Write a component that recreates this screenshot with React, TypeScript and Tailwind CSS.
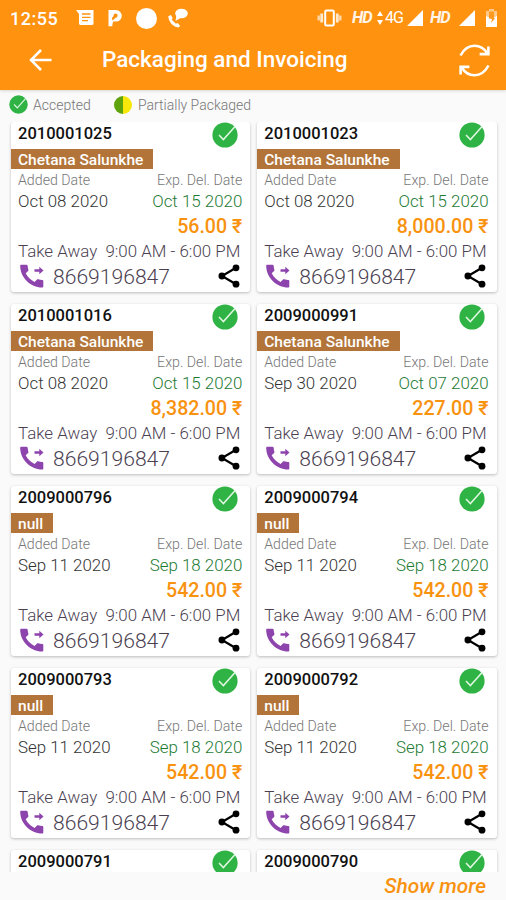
type Order = {
  id: string;
  customer: string;
  added: string;
  due: string;
  amount: string;
};

const PHONE = "8669196847";

const orders: Order[] = [
  { id: "2010001025", customer: "Chetana Salunkhe", added: "Oct 08 2020", due: "Oct 15 2020", amount: "56.00" },
  { id: "2010001023", customer: "Chetana Salunkhe", added: "Oct 08 2020", due: "Oct 15 2020", amount: "8,000.00" },
  { id: "2010001016", customer: "Chetana Salunkhe", added: "Oct 08 2020", due: "Oct 15 2020", amount: "8,382.00" },
  { id: "2009000991", customer: "Chetana Salunkhe", added: "Sep 30 2020", due: "Oct 07 2020", amount: "227.00" },
  { id: "2009000796", customer: "null", added: "Sep 11 2020", due: "Sep 18 2020", amount: "542.00" },
  { id: "2009000794", customer: "null", added: "Sep 11 2020", due: "Sep 18 2020", amount: "542.00" },
  { id: "2009000793", customer: "null", added: "Sep 11 2020", due: "Sep 18 2020", amount: "542.00" },
  { id: "2009000792", customer: "null", added: "Sep 11 2020", due: "Sep 18 2020", amount: "542.00" },
];

const nextOrderIds = ["2009000791", "2009000790"];

function CheckBadge({ className }: { className: string }) {
  return (
    <svg viewBox="0 0 26 26" className={className}>
      <circle cx="13" cy="13" r="12.6" fill="#2fb344" />
      <path d="M7 13l4.4 4.6L23.5 4" fill="none" stroke="#e0f7e2" strokeWidth="1.5" />
    </svg>
  );
}

function PhoneForwardIcon() {
  return (
    <svg viewBox="0 0 24 24" className="h-6 w-6" fill="#8e44ad">
      <path d="M1.2.8h5.300c.7 0 1.100.4 1.200 1.100.1 1.400.3 2.600.7 3.800.1.500 0 .9-.3 1.200L5.700 9.300c1.900 3.900 4.900 6.700 8.900 8.600l2.400-2.400c.3-.3.800-.4 1.200-.3 1.400.5 2.500.7 4 .7.7 0 1.100.4 1.100 1.100v5.400c0 .7-.4 1.100-1.100 1.100C10.400 23.500.3 13.400.2 2c0-.7.3-1.200 1-1.200z" />
      <path d="M14.500 5.200h4.800V2.800l4.200 3.700-4.200 3.700V7.800h-4.800z" />
    </svg>
  );
}

function ShareIcon() {
  return (
    <svg viewBox="0 0 22 24" className="h-6 w-[22px]">
      <path d="M18 3.800L4 12l14 8.200" fill="none" stroke="#000" strokeWidth="2.200" />
      <circle cx="18" cy="3.800" r="3.400" />
      <circle cx="3.900" cy="12" r="3.400" />
      <circle cx="18" cy="20.200" r="3.400" />
    </svg>
  );
}

function SignalIcon() {
  return (
    <svg viewBox="0 0 16 16" className="h-4 w-4" fill="#fff">
      <path d="M16 0v16H0z" />
    </svg>
  );
}

function StatusBar() {
  return (
    <div className="flex h-9 items-center pr-2 pl-[10px] text-white">
      <span className="w-[66px] text-[18px] font-medium tracking-[0.5px]">12:55</span>
      <svg viewBox="0 0 18 16" className="h-4 w-[18px]">
        <path d="M0 0h17.500v13.500q0 1.500-1.500 1.500H4.500Q3 15 3 13.500V4z" fill="#fff" />
        <path d="M6 4h8.500M6 7.300h8.500M6 10.600h6" stroke="#ff920f" strokeWidth="1.300" />
      </svg>
      <svg viewBox="0 0 14 18" className="ml-[14px] h-[18px] w-[14px]" fill="#fff">
        <path d="M.5 1H8a5.800 5.800 0 0 1 0 11.600H5L4.200 17.300H.5z" />
        <ellipse cx="7.600" cy="6.600" rx="2" ry="2.200" fill="#ff920f" />
        <path d="M3.800 9l2.600-2.800 1.200 2.600-3 2.700z" fill="#ff920f" />
      </svg>
      <span className="ml-[14px] h-[21px] w-[21px] rounded-full bg-white" />
      <svg viewBox="0 0 20 20" className="ml-[11px] h-5 w-5" fill="#fff">
        <ellipse cx="13.500" cy="5.500" rx="6.300" ry="4.800" />
        <path d="M8.500 7l-1 6 5-3z" />
        <path d="M.3 8.200l2.700-1.200 1.700 3.200-1.100 1.300 4.300 4.200 1.800-.7 2.600 3-2 1.500C4.800 18.500.6 14 .3 8.200z" />
      </svg>
      <svg viewBox="0 0 25 18" className="ml-auto h-[18px] w-[25px]" fill="none" stroke="#fff">
        <rect x="8.200" y="1.500" width="8.600" height="15" rx="1.200" strokeWidth="2" />
        <path d="M4.700 4.500v9M20.300 4.500v9" strokeWidth="2.800" opacity=".8" />
        <path d="M1.700 6.500v5M23.300 6.500v5" strokeWidth="2.400" opacity=".65" />
      </svg>
      <span className="ml-[10px] w-[22px] text-[16.500px] leading-5 font-bold tracking-[-1px] italic opacity-90">HD</span>
      <svg viewBox="0 0 6 14" className="ml-[3px] h-[14px] w-[6px]" fill="#fff">
        <path d="M3 0l3 5H0zM3 14L0 9h6z" />
      </svg>
      <span className="ml-[2px] w-[19px] text-[16px] leading-5 tracking-[-1px]">4G</span>
      <span className="ml-[3px]">
        <SignalIcon />
      </span>
      <span className="ml-[7px] w-[22px] text-[16.500px] leading-5 font-bold tracking-[-1px] italic opacity-90">HD</span>
      <span className="ml-[7px]">
        <SignalIcon />
      </span>
      <svg viewBox="0 0 11 18" className="mr-px ml-[11px] h-[18px] w-[11px]">
        <path d="M3 2V0h5v2h3v7H0V2z" fill="#ffc98b" />
        <path d="M0 7l4 2V7h3v2l4-2v11H0z" fill="#fff" />
        <path d="M3 2.500h5v6.500l1 .5L5 14l1-4-3-.5z" fill="#ff9a20" />
      </svg>
    </div>
  );
}

function Header() {
  return (
    <header className="z-10 h-[90px] shrink-0 bg-[#ff920f] shadow-[0_1px_3px_rgba(0,0,0,0.15)]">
      <StatusBar />
      <div className="flex h-12 items-center pr-4 pl-[29px]">
        <svg viewBox="0 0 23 22" className="h-[22px] w-[23px]" fill="none" stroke="#fff" strokeWidth="2.500">
          <path d="M22.500 11H2M12 1L2 11l10 10" />
        </svg>
        <h1 className="ml-[50px] text-[22.500px] font-medium text-white">Packaging and Invoicing</h1>
        <svg viewBox="0 0 31 33" className="ml-auto h-[33px] w-[31px]" fill="none" stroke="#fff" strokeWidth="2.600">
          <path d="M1.500 11.500C5 5 10 1.800 15.500 1.800c5.500 0 9.700 2.700 12.500 7.200" />
          <path d="M29.400 2.500v7.600h-8.800" />
          <path d="M29.500 21.500c-3.500 6.500-8.500 9.700-14 9.700-5.500 0-9.700-2.700-12.500-7.200" />
          <path d="M1.600 30.500v-7.600h8.800" />
        </svg>
      </div>
    </header>
  );
}

function Legend() {
  return (
    <div className="flex h-8 shrink-0 items-center pb-[3px] pl-[9px] text-[14px] font-light text-[#777]">
      <CheckBadge className="h-[19px] w-[19px]" />
      <span className="ml-[5px] w-[81px] pt-0.5">Accepted</span>
      <svg viewBox="0 0 18 18" className="h-[18px] w-[18px]">
        <path d="M9 0a9 9 0 0 0 0 18z" fill="#5fa30c" />
        <path d="M9 0a9 9 0 0 1 0 18z" fill="#f7e80a" />
      </svg>
      <span className="ml-[6px] pt-0.5">Partially Packaged</span>
    </div>
  );
}

function CardTop({ id }: { id: string }) {
  return (
    <div className="flex h-[27px] items-start justify-between pr-3 pl-[7px]">
      <span className="text-[16.500px] leading-[24px] font-medium text-[#111]">{id}</span>
      <CheckBadge className="h-[26px] w-[26px]" />
    </div>
  );
}

function OrderCard({ order }: { order: Order }) {
  return (
    <article className="h-[170px] rounded-[3px] bg-white whitespace-nowrap shadow-[0_1px_3px_rgba(0,0,0,0.25)]">
      <CardTop id={order.id} />
      <div className="flex h-5">
        <span className="bg-[#b27438] pr-[10px] pl-[7px] text-[15.500px] leading-[22px] font-medium text-white">
          {order.customer}
        </span>
      </div>
      <div className="flex h-[22px] items-center justify-between pt-0.5 pr-2 pl-[7px] text-[14.200px] font-light text-[#777]">
        <span>Added Date</span>
        <span>Exp. Del. Date</span>
      </div>
      <div className="flex h-[22px] items-center justify-between pr-2 pl-[7px] text-[16.900px] font-light">
        <span className="text-[#333]">{order.added}</span>
        <span className="text-[#1d7a33]">{order.due}</span>
      </div>
      <div className="flex h-[26px] items-center justify-end pt-px pr-2 text-[19.600px] font-medium text-[#f8920f]">
        {order.amount} ₹
      </div>
      <div className="flex h-6 items-center justify-between pt-0.5 pr-[10px] pl-[7px] text-[16.900px] font-light text-[#4b3f52]">
        <span>Take Away</span>
        <span>9:00 AM - 6:00 PM</span>
      </div>
      <div className="flex h-[26px] items-center pr-[10.5px] pl-[9px]">
        <PhoneForwardIcon />
        <span className="ml-[9px] pt-px text-[21.100px] font-light text-[#4b3f52]">{PHONE}</span>
        <span className="ml-auto">
          <ShareIcon />
        </span>
      </div>
    </article>
  );
}

export default function App() {
  return (
    <div className="flex h-[900px] w-[506px] flex-col overflow-hidden bg-[#fafafa] font-[Roboto,'Noto_Sans',sans-serif]">
      <Header />
      <Legend />
      <main className="grid h-[750px] shrink-0 grid-cols-2 content-start gap-x-[7px] gap-y-3 overflow-hidden pr-[9.5px] pl-[11px]">
        {orders.map((order) => (
          <OrderCard key={order.id} order={order} />
        ))}
        {nextOrderIds.map((id) => (
          <article key={id} className="h-[27px] rounded-t-[3px] bg-white shadow-[0_1px_3px_rgba(0,0,0,0.25)]">
            <CardTop id={id} />
          </article>
        ))}
      </main>
      <footer className="flex h-7 items-center justify-end pt-0.5 pr-5">
        <button className="text-[20.800px] font-medium text-[#f8920f] italic">Show more</button>
      </footer>
    </div>
  );
}
